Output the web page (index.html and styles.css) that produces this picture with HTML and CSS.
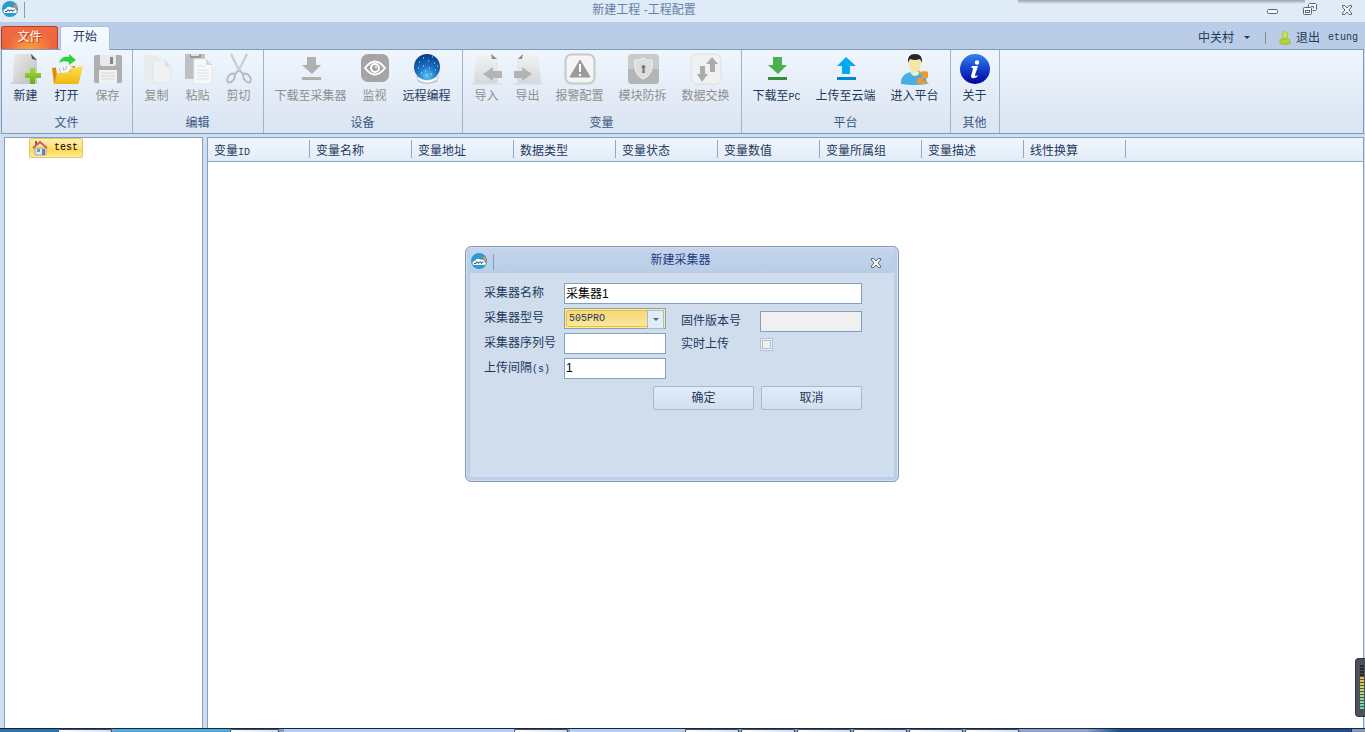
FILE: index.html
```html
<!DOCTYPE html>
<html lang="zh-CN">
<head>
<meta charset="utf-8">
<title>新建工程 -工程配置</title>
<link rel="stylesheet" href="styles.css">
</head>
<body>
<svg class="defs" aria-hidden="true">
  <defs>
    <linearGradient id="paper" x1="0" y1="0" x2="1" y2="1"><stop offset="0" stop-color="#ececec"/><stop offset="1" stop-color="#bcbcbc"/></linearGradient>
    <linearGradient id="pale" x1="0" y1="0" x2="0" y2="1"><stop offset="0" stop-color="#f2f3f4"/><stop offset="1" stop-color="#d6d8da"/></linearGradient>
    <linearGradient id="folder" x1="0" y1="0" x2="0" y2="1"><stop offset="0" stop-color="#ffe152"/><stop offset="1" stop-color="#eeb80f"/></linearGradient>
    <radialGradient id="globe" cx=".5" cy=".85" r=".85"><stop offset="0" stop-color="#5cc6f5"/><stop offset=".45" stop-color="#1a72c4"/><stop offset="1" stop-color="#053a86"/></radialGradient>
    <linearGradient id="info" x1="0" y1="0" x2="0" y2="1"><stop offset="0" stop-color="#2f86ea"/><stop offset=".5" stop-color="#1440cc"/><stop offset="1" stop-color="#03039a"/></linearGradient>
    <linearGradient id="green" x1="0" y1="0" x2="0" y2="1"><stop offset="0" stop-color="#a5dc3a"/><stop offset="1" stop-color="#63ad12"/></linearGradient>
    <symbol id="logo" viewBox="0 0 16 16">
      <circle cx="8" cy="8" r="8" fill="#2b9ccb"/>
      <path d="M11.500 4.500 14 3.500l1.700 2.500-1.700 2.500z" fill="#ef8a4a"/>
      <path d="M2 11.500C.8 9.300 2.300 7.800 4 7.900 4.600 5.600 8 5 9.800 6.700c1.800-.9 4 .2 3.800 2.100 1.700.4 1.600 2.900-.2 3.100H2z" fill="#fff"/>
      <path d="M3 10.500h2l.5-1.500h1.500l.5 1.500 1-1.500h1.500l.5 1.500 1-1.500h1" stroke="#234f6f" fill="none"/>
    </symbol>
    <symbol id="close-icon" viewBox="0 0 12 12">
      <path d="M1.500 1.500h2.300L6 4l2.200-2.500h2.300V3L8 6l2.500 3v1.500H8.200L6 8l-2.200 2.500H1.500V9L4 6 1.500 3z" fill="#f4f8fc" stroke="#5c6472"/>
    </symbol>
  </defs>
</svg>

<div class="window">
  <header class="titlebar">
    <div class="quick"><svg class="logo"><use href="#logo"/></svg><i class="quick-line"></i></div>
    <h1 class="title">新建工程 -工程配置</h1>
    <div class="controls">
      <button class="control" aria-label="最小化"><svg width="12" height="12"><rect x=".5" y="5.500" width="10" height="4" rx="1" fill="#f6f9fc" stroke="#5c6472"/></svg></button>
      <button class="control" aria-label="还原"><svg width="14" height="13"><path d="M5.500 4.500v-3l1-1h6l1 1v5l-1 1h-3M8 3.500h2.500v2" fill="#f6f9fc" stroke="#5c6472"/><rect x=".5" y="4.500" width="8" height="7" rx="1" fill="#f6f9fc" stroke="#5c6472"/><rect x="2.500" y="7.500" width="4" height="2" fill="#fff" stroke="#5c6472"/></svg></button>
      <button class="control" aria-label="关闭"><svg width="12" height="12"><use href="#close-icon"/></svg></button>
    </div>
  </header>

  <nav class="tabs">
    <button class="tab tab-file">文件</button>
    <button class="tab tab-active">开始</button>
    <div class="account">
      <button class="account-site">中关村 <i class="caret"></i></button>
      <i class="account-line"></i>
      <button class="account-exit"><svg width="12" height="14"><path d="M1 12.500C.5 9 2 8 4 7.800h4c2 .2 3.500 1.200 3 4.700-1.500 1-8.500 1-10 0z" fill="#b4d437" stroke="#98b93a"/><ellipse cx="6" cy="4" rx="2.800" ry="3.500" fill="#c9e257" stroke="#a9c746"/></svg>退出</button>
      <span class="latin">etung</span>
    </div>
  </nav>

  <section class="ribbon">
    <div class="group">
      <div class="tools">
        <button class="tool w2"><svg viewBox="0 0 32 32"><ellipse cx="14" cy="30" rx="15" ry="1" fill="#c3c8ce"/><path d="M4 1h18l5 6v23H3z" fill="url(#paper)"/><path d="M21 1l6 6-5-1z" fill="#4f5358"/><path d="M20 15h5v5h6v5h-6v6h-5v-6h-5v-5h5z" fill="url(#green)"/></svg>新建</button>
        <button class="tool w2"><svg viewBox="0 0 32 32"><path d="M1 15l8-1 15-1v6L3 31z" fill="#e08a14"/><path d="M5 14l9-2 8 2-7 8H6z" fill="#f4f7fa"/><path d="M8 15l2 5M12 14l1 4M16 13l-2 4" stroke="#a8b8c6"/><path d="M10 20l9-1 2-4 11-2-4 16-1 2H3l3-11z" fill="url(#folder)"/><path d="M8 10C10 4 14 3 18 4V1l7 6-7 5V9c-4-1-7-1-10 1z" fill="#2fd038"/></svg>打开</button>
        <button class="tool w2" disabled><svg viewBox="0 0 32 32"><path d="M4 2h24q2 0 2 2v24q0 2-2 2H4q-2 0-2-2V4q0-2 2-2z" fill="#adafb1"/><path d="M8 2h16v9q0 2-2 2H10q-2 0-2-2z" fill="#e8e9ea"/><path d="M18 4h3v7h-3z" fill="#85878a"/><path d="M7 17h18v13H7z" fill="#f1f1f1"/><path d="M9 20h14M9 23h14M9 26h14" stroke="#d6d8da"/></svg>保存</button>
      </div>
      <h2 class="group-name">文件</h2>
    </div>
    <div class="group">
      <div class="tools">
        <button class="tool w2" disabled><svg viewBox="0 0 32 32"><path d="M3 2h12l5 6v21H3z" fill="#e9ebed"/><path d="M12 7h12l6 7v16H12z" fill="#f0f1f2" stroke="#e3e6e9"/><path d="M24 7l6 7h-6z" fill="#dfe2e5"/></svg>复制</button>
        <button class="tool w2" disabled><svg viewBox="0 0 32 32"><path d="M3 1h20v25H3z" fill="#bfc0c3"/><path d="M8 1h11v4H8z" fill="#97999c"/><path d="M9 1h8v2H9z" fill="#dfe1e4"/><path d="M12 6h12l6 6v19H12z" fill="#f7f8f9" stroke="#e4e7ea"/><path d="M15 13h8M15 17h12M15 20h12M15 23h12M15 26h12" stroke="#dee0e3"/><path d="M24 6l6 6h-6z" fill="#d3d6d9"/></svg>粘贴</button>
        <button class="tool w2" disabled><svg viewBox="0 0 32 32" fill="none" stroke="#b7b9bd" stroke-width="2"><path d="M8 1l8 16 5 5M24 1l-8 16-5 5"/><path d="M8 1l8 16M24 1l-8 16" stroke="#dcdee0" stroke-width="1"/><ellipse cx="8" cy="25" rx="3" ry="5" transform="rotate(35 8 25)"/><ellipse cx="24" cy="25" rx="3" ry="5" transform="rotate(-35 24 25)"/></svg>剪切</button>
      </div>
      <h2 class="group-name">编辑</h2>
    </div>
    <div class="group">
      <div class="tools">
        <button class="tool w6" disabled><svg viewBox="0 0 32 32"><path d="M12 4h9v8h5l-9 9-10-9h5zM7 24h19v3H7z" fill="#b0b0b1"/></svg>下载至采集器</button>
        <button class="tool w2" disabled><svg viewBox="0 0 32 32"><rect x="2" y="1" width="28" height="28" rx="7" fill="#a5a5a6"/><path d="M6 15q10-13 20 0-10 13-20 0z" fill="none" stroke="#fff" stroke-width="2"/><circle cx="16" cy="15" r="4" fill="none" stroke="#fff" stroke-width="2"/><circle cx="17" cy="14" r="1" fill="#fff"/></svg>监视</button>
        <button class="tool w4"><svg viewBox="0 0 32 32"><path d="M5 22q11 10 23 0l-2 7q-10 4-19 0z" fill="#c3c7cb"/><path d="M7 25q9 7 19 0" stroke="#fff" stroke-width="2" fill="none"/><circle cx="16" cy="14" r="13" fill="url(#globe)"/><path d="M8 9h1M12 5h1M17 8h1M21 4h1M23 10h1M7 15h1M12 13h1M18 15h1M24 17h1M10 20h1M15 22h1M20 21h1M14 18h1M26 13h1" stroke="#d6f2ff" stroke-width="1"/></svg>远程编程</button>
      </div>
      <h2 class="group-name">设备</h2>
    </div>
    <div class="group">
      <div class="tools">
        <button class="tool w2" disabled><svg viewBox="0 0 32 32"><path d="M5 1h16l6 5v24H3z" fill="url(#pale)"/><path d="M20 1l6 5h-5z" fill="#85888c"/><path d="M1 31h30" stroke="#d1d5da"/><path d="M12 21l10-7v4h9v7h-9v3z" fill="#b2b4b6"/></svg>导入</button>
        <button class="tool w2" disabled><svg viewBox="0 0 32 32"><path d="M10 1h16l3 29H5V6z" fill="url(#pale)"/><path d="M11 1L6 6h4z" fill="#85888c"/><path d="M1 31h30" stroke="#d1d5da"/><path d="M20 21l-10-7v4H2v7h8v3z" fill="#b2b4b6"/></svg>导出</button>
        <button class="tool w4" disabled><svg viewBox="0 0 32 32"><rect x="1.500" y="1.500" width="29" height="29" rx="6" fill="#f4f4f4" stroke="#c6c8cb" stroke-width="2"/><path d="M16 7L26 24H6z" fill="#9a9b9c" stroke="#9a9b9c" stroke-linejoin="round"/><path d="M16 11v8M16 21v2" stroke="#fff" stroke-width="2"/></svg>报警配置</button>
        <button class="tool w4" disabled><svg viewBox="0 0 32 32"><rect x="1" y="1" width="31" height="30" rx="4" fill="#c9cacc"/><path d="M1 16h31v11q0 4-4 4H5q-4 0-4-4z" fill="#b3b5b7"/><path d="M16 5q4 3 9 2 2 15-9 19Q6 22 8 7q5 1 8-2z" fill="#dcddde" stroke="#f2f2f2"/><circle cx="16.500" cy="14" r="2" fill="#77797b"/><path d="M16 14h1l1 6h-3z" fill="#77797b"/></svg>模块防拆</button>
        <button class="tool w4" disabled><svg viewBox="0 0 32 32"><rect x="1" y="1" width="30" height="30" rx="6" fill="#f1f1f2" stroke="#dcdee0"/><path d="M10 13h5v8h3l-6 8-5-8h3zM20 19v-8h-4l6-7 6 7h-3v8z" fill="#a9abac"/></svg>数据交换</button>
      </div>
      <h2 class="group-name">变量</h2>
    </div>
    <div class="group">
      <div class="tools">
        <button class="tool w4"><svg viewBox="0 0 32 32"><path d="M12 4h9v8h5l-9 9-10-9h5z" fill="#4caf50"/><path d="M7 24h19v3H7z" fill="#388e3c"/></svg><span>下载至<span class="latin">PC</span></span></button>
        <button class="tool w5"><svg viewBox="0 0 32 32"><path d="M12 21h8v-8h6L16 4 7 13h5z" fill="#03a9f4"/><path d="M7 24h19v3H7z" fill="#0288d1"/></svg>上传至云端</button>
        <button class="tool w4"><svg viewBox="0 0 32 32"><path d="M2 30Q2 20 13 19h5q10 1 10 12-13 2-26 0z" fill="#46aee6"/><path d="M12 16h8v5q-4 4-8 0z" fill="#dff3d6"/><ellipse cx="16" cy="11" rx="6" ry="8" fill="#f8e7a4"/><path d="M9 10q-1-9 7-9t7 9l-2-4q-5 2-10 0z" fill="#222629"/><path d="M18 17l4 2q4-2 6 0l1-1v7h-7l2-3q-4-1-6-5zM30 31l-3-1q-4 2-6 0l-3 1v-6h7l-2 3q5-1 7 3z" fill="#f59a28"/></svg>进入平台</button>
      </div>
      <h2 class="group-name">平台</h2>
    </div>
    <div class="group">
      <div class="tools">
        <button class="tool w2"><svg viewBox="0 0 32 32"><circle cx="16" cy="16" r="15" fill="url(#info)"/><circle cx="18" cy="9.500" r="2.200" fill="#fff"/><path d="M13 13h6l-3 9q0 2 3 0l-1 2q-6 3-6-1l2-7q0-2-2-1z" fill="#fff"/></svg>关于</button>
      </div>
      <h2 class="group-name">其他</h2>
    </div>
  </section>

  <main class="workspace">
    <aside class="tree">
      <button class="node"><svg width="16" height="16"><path d="M3 8h11v7H3z" fill="#e3e9ef" stroke="#9aa7b5"/><path d="M3 1h2v4H3z" fill="#9c5552"/><path d="M1 8l7-6 7 6" fill="none" stroke="#c5605d" stroke-width="2"/><path d="M5 9h3v3H5z" fill="#6e93c4"/><path d="M10 9h3v6h-3z" fill="#77818d"/></svg><span class="latin">test</span></button>
    </aside>
    <section class="list">
      <table class="grid">
        <thead><tr><th>变量<span class="latin">ID</span></th><th>变量名称</th><th>变量地址</th><th>数据类型</th><th>变量状态</th><th>变量数值</th><th>变量所属组</th><th>变量描述</th><th>线性换算</th><td class="rest"></td></tr></thead>
      </table>
    </section>
  </main>

  <footer class="taskbar">
    <i class="start"></i><i class="task"></i><i class="sky"></i><i class="task task-short"></i><i class="glass"></i><i class="task"></i><i class="glass-short"></i><i class="task"></i><i class="task"></i><i class="task"></i><i class="task"></i><i class="task"></i><i class="task"></i><i class="tray"></i><i class="desktop"></i>
  </footer>
</div>

<div class="top-shadow"></div>
<div class="meter"><i class="meter-bars"></i></div>

<section class="dialog" role="dialog" aria-labelledby="dialog-title">
  <header class="dialog-head">
    <div class="quick"><svg class="logo"><use href="#logo"/></svg><i class="quick-line"></i></div>
    <h2 class="dialog-title" id="dialog-title">新建采集器</h2>
    <button class="dialog-close" aria-label="关闭"><svg width="12" height="12"><use href="#close-icon"/></svg></button>
  </header>
  <form class="form">
    <div class="field"><label for="name">采集器名称</label><input class="box wide" id="name" type="text" value="采集器1"></div>
    <div class="halves">
      <div class="half">
        <div class="field"><label for="model">采集器型号</label><span class="combo"><select id="model"><option>505PRO</option></select></span></div>
        <div class="field"><label for="serial">采集器序列号</label><input class="box" id="serial" type="text"></div>
        <div class="field"><label for="interval">上传间隔<span class="latin">(s)</span></label><input class="box" id="interval" type="text" value="1"></div>
      </div>
      <div class="half half-right">
        <div class="field"><label for="firmware">固件版本号</label><input class="box" id="firmware" type="text" disabled></div>
        <div class="field"><label for="live">实时上传</label><input class="check" id="live" type="checkbox" disabled></div>
      </div>
    </div>
    <div class="actions"><button class="action" type="button">确定</button><button class="action" type="button">取消</button></div>
  </form>
</section>
</body>
</html>
```

FILE: styles.css
```css
* { box-sizing: border-box; }

body {
  margin: 0;
  overflow: hidden;
  color: #1e395b;
  font: 12px/16px "Liberation Sans", "Noto Sans CJK SC", sans-serif;
}

button, input, select { font: inherit; color: inherit; }
button { margin: 0; padding: 0; border: 0; background: none; }
h1, h2 { margin: 0; font-size: 12px; font-weight: 400; }
svg { display: block; flex: none; }
.defs { position: absolute; width: 0; height: 0; }
.latin { font-family: "Liberation Mono", monospace; font-size: 10px; line-height: 10px; }

.window { display: flex; flex-direction: column; height: 100vh; background: #cfddee; }

/* Title bar */
.titlebar { display: flex; flex: none; height: 22px; background: #dfebf7; }
.quick { display: flex; gap: 6px; width: 33px; padding: 1px 0 0 2px; }
.logo { width: 16px; height: 16px; }
.quick-line { width: 1px; height: 16px; margin-top: 1px; background: #8b9bb0; }
.title { flex: 1; padding-top: 2px; text-align: center; color: #6680a8; }
.controls { display: flex; width: 110px; }
.control { display: flex; flex: 1; align-items: center; justify-content: center; height: 19px; }

/* Tabs */
.tabs { display: flex; flex: none; gap: 2px; height: 27px; padding: 4px 7px 0 1px; background: #bbcde6; }
.tab { border: 1px solid #a9bfdb; border-bottom: 0; border-radius: 3px 3px 0 0; padding-bottom: 3px; }
.tab-file {
  width: 57px;
  border-color: #bf3a1c;
  color: #fff;
  background: radial-gradient(ellipse at 50% 110%, #fba63f, transparent 65%), linear-gradient(#ee6a45, #ec6138);
  text-shadow: 1px 1px 0 #b83a1c;
}
.tab-active { width: 50px; margin-bottom: -1px; background: linear-gradient(#f7fbff, #edf5fd); z-index: 1; }
.account { display: flex; flex: 1; align-items: center; justify-content: flex-end; }
.account-site { display: flex; align-items: center; gap: 10px; }
.caret { border: 3px solid transparent; border-top-color: #1e395b; border-bottom: 0; }
.account-line { width: 1px; height: 12px; margin: 0 13px 0 15px; background: #8d8d8d; }
.account-exit { display: flex; align-items: center; gap: 5px; margin-right: 8px; }

/* Ribbon */
.ribbon {
  display: flex;
  flex: none;
  height: 85px;
  margin: 0 1px;
  border: 1px solid #7b9abc;
  background: linear-gradient(#eff6fe, #e4ecf7 50%, #dae5f2);
}
.group { display: flex; flex-direction: column; padding: 3px 4px 0 3px; border-right: 1px solid #9db4d0; }
.tools { display: flex; }
.tool { display: flex; flex-direction: column; align-items: center; gap: 3px; white-space: nowrap; }
.tool svg { width: 32px; height: 32px; }
.tool:disabled { color: #8f8f8f; }
.w2 { width: 41px; }
.w4 { width: 63px; }
.w5 { width: 75px; }
.w6 { width: 87px; }
.group-name { margin-top: 11px; text-align: center; color: #3b5782; }

/* Workspace */
.workspace { display: flex; flex: 1; gap: 4px; min-height: 0; padding: 3px 1px 0 4px; }
.tree, .list { border: 1px solid #86a0be; border-bottom: 0; background: #fff; }
.tree { width: 199px; padding-left: 24px; }
.list { flex: 1; }
.node {
  display: flex;
  align-items: center;
  gap: 6px;
  height: 20px;
  padding: 0 4px 0 2px;
  border: 1px solid #e3c66c;
  border-radius: 2px;
  color: #000;
  background: linear-gradient(#fff0b3, #ffe27c 45%, #ffd84f 60%, #ffeb9a);
}
.grid { width: 100%; border-collapse: collapse; table-layout: fixed; }
.grid thead { background: linear-gradient(#f0f6fd, #e2ecf9); }
.grid th {
  width: 102px;
  height: 23px;
  padding: 3px 6px 0;
  text-align: left;
  font-weight: 400;
  background: linear-gradient(#8fa8c4, #8fa8c4) right center / 1px 18px no-repeat;
}
.grid tr { border-bottom: 1px solid #8ba5c4; }
.rest { padding: 0; }

/* Taskbar edge */
.taskbar { display: flex; flex: none; height: 4px; overflow: hidden; border-top: 1px solid #16253c; background: #829dc4; }
.start { width: 58px; background: #2f71aa; }
.task { width: 54px; margin-right: 2px; border: 1px solid #3f4c63; border-bottom: 0; border-radius: 2px 2px 0 0; background: linear-gradient(90deg, #fff, #cfe0fa); }
.task-short { width: 49px; margin-right: 5px; }
.sky { width: 116px; background: #4fabdc; }
.glass { width: 230px; background: #b4cef0; }
.glass-short { width: 115px; background: #b4cef0; }
.tray { flex: 1; background: linear-gradient(90deg, #8ca3c4 20%, #214e89 30%); }
.desktop { width: 14px; border-left: 1px solid #1b2d46; background: #8199b6; }

/* Overlays */
.top-shadow { position: absolute; top: 0; left: 1018px; right: 60px; height: 4px; background: linear-gradient(#9aa2ad, #dfebf700); }
.meter { position: absolute; right: 0; bottom: 15px; width: 10px; padding: 6px 1px 6px 4px; border: 1px solid #30353e; border-right: 0; border-radius: 4px 0 0 4px; background: #4c515d; }
.meter-bars {
  display: block;
  height: 45px;
  background: repeating-linear-gradient(transparent 0 2px, #4c515d 2px 3px), linear-gradient(#25282f 25%, #e8b93f 27%, #d6d35a 50%, #8fe07c 70%, #58dcc0);
}

/* Dialog */
.dialog {
  position: absolute;
  top: 246px;
  left: 465px;
  width: 434px;
  padding: 0 4px 4px;
  border: 1px solid #8497ae;
  border-radius: 6px;
  background: #bccfe8;
  box-shadow: inset 0 0 0 1px #d3e1f3;
}
.dialog-head { display: flex; height: 25px; margin: 1px 0 0; padding-top: 4px; background: linear-gradient(#c4d5ec, #b9cde6); }
.dialog-head .quick { padding: 1px 0 0 1px; }
.dialog-title { flex: 1; text-align: center; color: #1e3c84; }
.dialog-close { width: 36px; height: 21px; padding-left: 12px; }
.form { padding: 10px 32px 67px 14px; background: #cfdded; }
.field { display: flex; align-items: center; height: 21px; }
.field label { flex: none; width: 80px; padding-bottom: 2px; }
.box { width: 102px; min-width: 0; height: 21px; padding: 0 1px 2px; border: 1px solid #84a0c0; color: #000; background: #fff; }
.box:disabled { background: #f0f0f0; }
.wide { flex: 1; }
.halves { display: flex; gap: 15px; margin-top: 4px; }
.half { display: flex; flex-direction: column; gap: 4px; }
.half-right { padding-top: 3px; }
.half-right .field label { width: 79px; }
.half-right { gap: 2px; }
.check { appearance: none; width: 13px; height: 13px; margin: 0; border: 1px solid #adc2e4; background: #f0f0f0; box-shadow: inset 0 0 0 1px #e9eff8, inset 0 0 0 2px #b9bdc4; }
.combo { position: relative; width: 102px; height: 21px; padding: 1px; border: 1px solid #84a0c0; background: #fff27f; }
.combo select {
  appearance: none;
  display: block;
  width: 82px;
  height: 17px;
  padding: 0 2px;
  border: 1px solid #e9bd42;
  border-radius: 2px;
  background: linear-gradient(#f6d77c, #fae08c 60%, #fde9a4);
  font: 10px/14px "Liberation Mono", monospace;
}
.combo::before { content: ""; position: absolute; top: 1px; right: 1px; width: 15px; height: 17px; border: 1px solid #a7bad6; background: #e3edf8; pointer-events: none; }
.combo::after { content: ""; position: absolute; top: 9px; right: 6px; border: 3px solid transparent; border-top-color: #5a6270; border-bottom: 0; pointer-events: none; }
.actions { display: flex; justify-content: flex-end; gap: 7px; margin-top: 7px; }
.action { width: 101px; height: 24px; padding-bottom: 1px; border: 1px solid #a6b9d2; border-radius: 2px; background: linear-gradient(#e1ecf8, #d0dfee); }
```
